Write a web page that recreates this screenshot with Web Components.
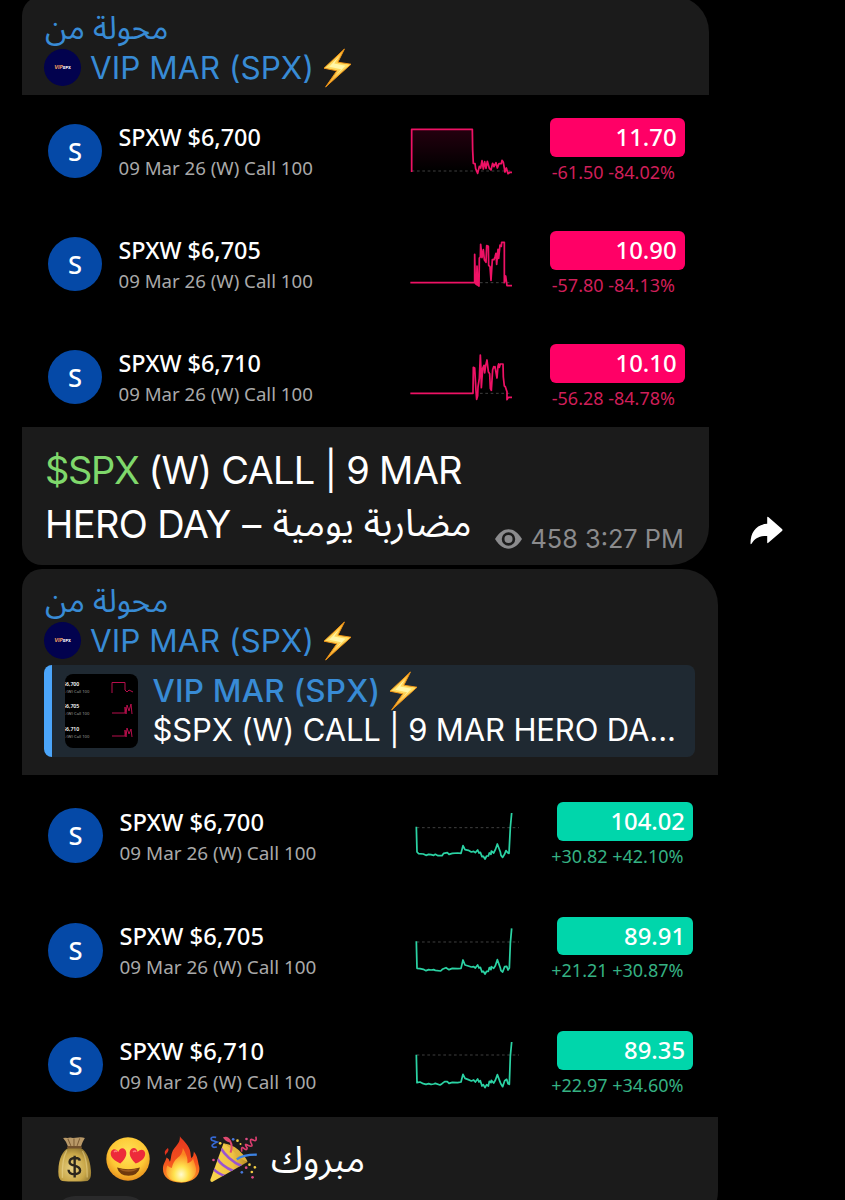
<!DOCTYPE html>
<html lang="ar">
<head>
<meta charset="utf-8">
<title>VIP MAR (SPX)</title>
<style>
  html, body {
    margin: 0;
    height: 1200px;
    overflow: hidden;
    background: #000;
  }
  body {
    font-family: Inter, "Noto Sans Arabic", "Liberation Sans", sans-serif;
    color: #fff;
  }
</style>
</head>
<body>
<chat-page></chat-page>

<script>
// setup runs on the cloned fragment, before the inner elements are connected
function define(name, html, setup) {
  const tmpl = document.createElement("template");
  tmpl.innerHTML = html;
  customElements.define(name, class extends HTMLElement {
    constructor() {
      super();
      this.attachShadow({ mode: "open" });
    }
    connectedCallback() {
      if (this.shadowRoot.firstChild) return;
      const view = tmpl.content.cloneNode(true);
      if (setup) setup(this, view);
      this.shadowRoot.appendChild(view);
    }
  });
}

// ---------- icons ----------

define("icon-bolt", `
<style>
  :host { display: block; width: 29px; height: 40px; flex: none; }
  svg { display: block; width: 100%; height: 100%; }
</style>
<svg viewBox="970 144 88 121">
  <defs><linearGradient id="g" x1="0" y1="0" x2="0" y2="1">
    <stop offset="0" stop-color="#ffae25"/><stop offset=".45" stop-color="#ffe36a"/><stop offset="1" stop-color="#f59a1c"/>
  </linearGradient></defs>
  <path d="M1035 147 L973 205 L1012 213 L978 262 L1055 193 L1015 187 Z" fill="url(#g)" stroke="#ef9416" stroke-width="3" stroke-linejoin="round"/>
  <path d="M1021 166 L989 201 L1025 208 L1003 234 L1038 198 L1004 191 Z" fill="#fff6a8"/>
</svg>`);

define("icon-eye", `
<style>
  :host { display: block; width: 27px; height: 20px; flex: none; }
  svg { display: block; }
</style>
<svg width="27" height="20" viewBox="0 0 27 20">
  <path d="M0 10 C4 3.4 8.6 .3 13.5 .3 S23 3.4 27 10 C23 16.6 18.4 19.7 13.5 19.7 S4 16.6 0 10 Z" fill="#8b8b8d"/>
  <circle cx="13.5" cy="10" r="5.4" fill="none" stroke="#1c1c1c" stroke-width="2.7"/>
</svg>`);

define("icon-share", `
<style>
  :host { display: block; width: 33px; height: 29px; }
  svg { display: block; }
</style>
<svg width="33" height="29" viewBox="0 0 33 29">
  <path d="M17.2 1.6 Q17.2 .2 18.3 1.1 L32 13 Q33 14 32 15 L18.3 26.8 Q17.2 27.7 17.2 26.3 V20 C9.5 19.8 4.8 22.4 1.7 27.6 Q.6 29 .5 27.2 C.5 16 6.5 8.3 17.2 7.8 Z" fill="#fff"/>
</svg>`);

define("emoji-row", `
<style>
  :host { display: flex; align-items: center; }
  svg { display: block; flex: none; }
  .bag { margin-right: 14px; }
  .face { margin-right: 12px; }
  .fire { margin-right: 8px; }
</style>
<svg class="bag" width="34" height="45" viewBox="56 36 100 132">
  <defs><radialGradient id="b" cx=".42" cy=".6" r=".65">
    <stop offset="0" stop-color="#e6cf82"/><stop offset=".65" stop-color="#c9a748"/><stop offset="1" stop-color="#8f742f"/>
  </radialGradient></defs>
  <path d="M71 39 Q78 37 84 39 Q92 36 100 39 Q108 37 115 37 Q126 35 135 39 Q128 50 123 65 H86 Q81 50 71 39 Z" fill="#b99968"/>
  <path d="M85 41 L94 62 M103 40 V62 M120 40 L112 62" stroke="#7d5e35" stroke-width="3"/>
  <path d="M86 68 C70 77 58 98 57 135 Q56 162 68 165 Q104 169 143 165 Q155 160 153 134 C150 98 139 77 123 68 Z" fill="url(#b)"/>
  <path d="M82 75 Q67 100 69 156 M128 77 Q142 101 142 155" fill="none" stroke="#f0dc98" stroke-width="4" opacity=".5"/>
  <rect x="83" y="62" width="43" height="8" rx="4" fill="#73522d"/>
  <path d="M120 105 C119 95 91 94 90 109 C90 125 121 115 121 134 C121 149 88 150 87 132 M105 91 V155" fill="none" stroke="#2b261d" stroke-width="7"/>
</svg>
<svg class="face" width="44" height="44" viewBox="0 0 44 44">
  <defs>
    <radialGradient id="f" cx=".5" cy=".38" r=".62"><stop offset="0" stop-color="#ffe45a"/><stop offset=".65" stop-color="#fdc835"/><stop offset="1" stop-color="#e8901d"/></radialGradient>
    <path id="h" d="M0 7.5 C-8.5 2.2 -9 -3.6 -6.6 -6.2 C-4.3 -8.6 -1 -7.2 0 -4 C1.6 -7.2 5 -8.2 7 -5.4 C9.2 -2 7 3.6 0 7.5 Z"/>
  </defs>
  <circle cx="22" cy="22" r="21.7" fill="url(#f)"/>
  <use href="#h" transform="translate(13 19) rotate(-10)" fill="#ed2b3a"/>
  <use href="#h" transform="translate(31 19) rotate(10)" fill="#ed2b3a"/>
  <path d="M8 15 Q10 13 11 15 M27 15 Q29 13 30 15" stroke="#ff7a80" stroke-width="1.5" fill="none"/>
  <path d="M11 30.5 Q22 34 34 30.5 Q32 38.5 22.5 38.8 Q13 38.5 11 30.5 Z" fill="#70390d"/>
  <path d="M13 31.6 Q22 34 32 31.6 Q28 34.8 22.5 34.8 Q16 34.8 13 31.6 Z" fill="#9c5b1f"/>
</svg>
<svg class="fire" width="39" height="47" viewBox="365 30 116 142">
  <defs>
    <linearGradient id="o" x1="0" y1="0" x2="0" y2="1"><stop offset="0" stop-color="#e5361f"/><stop offset=".55" stop-color="#f4511e"/><stop offset="1" stop-color="#fb9a26"/></linearGradient>
    <radialGradient id="y" cx=".5" cy=".78" r=".6"><stop offset="0" stop-color="#fffbd0"/><stop offset=".4" stop-color="#ffe34f"/><stop offset="1" stop-color="#fb8421"/></radialGradient>
  </defs>
  <path d="M418 31 C427 44 447 58 450 80 Q451 92 453 97 Q461 91 460 77 C472 91 472 106 476 121 C482 146 463 170 423 171 C383 171 366 151 367 128 C367 115 374 109 378 95 Q386 99 388 108 C393 97 390 88 397 74 C405 60 420 51 418 31 Z" fill="url(#o)"/>
  <path d="M382 66 Q387 74 377 84 Q372 92 374 86 Q368 76 382 66 Z" fill="#df321d"/>
  <path d="M427 66 C436 83 443 96 441 112 Q453 109 458 98 C464 119 473 132 462 150 Q450 169 423 169 Q392 169 381 151 Q373 136 380 119 Q388 126 394 127 C397 109 406 99 417 91 Q427 80 427 66 Z" fill="url(#y)"/>
</svg>
<svg width="49" height="48" viewBox="507 29 146 144">
  <defs>
    <clipPath id="c"><path d="M550 54 Q574 62 622 110 L516 170 Q509 170 511 162 Z"/></clipPath>
    <linearGradient id="p"><stop offset="0" stop-color="#f8d54c"/><stop offset=".6" stop-color="#efc344"/><stop offset="1" stop-color="#b98a24"/></linearGradient>
  </defs>
  <path d="M550 54 Q574 62 622 110 L516 170 Q509 170 511 162 Z" fill="url(#p)"/>
  <g clip-path="url(#c)" stroke="#9a55cf" stroke-width="8" fill="none">
    <path d="M541 67 Q562 103 605 123 M529 97 Q545 124 580 137 M517 128 Q533 147 560 153"/>
  </g>
  <path d="M550 54 Q583 58 608 87 Q621 103 622 110 Q602 103 582 80 Q563 62 550 54 Z" fill="#e0b23a"/>
  <path d="M571 82 C582 54 563 34 553 38 Q561 49 573 49" fill="none" stroke="#e04a70" stroke-width="6"/>
  <path d="M590 102 Q608 88 650 88" fill="none" stroke="#3d83e2" stroke-width="7"/>
  <path d="M528 36 Q507 33 515 45 L531 50 Q507 60 521 66 L530 65" fill="none" stroke="#3568d2" stroke-width="5"/>
  <path d="M605 79 Q602 61 611 69 Q620 77 621 68 Q610 52 623 60 Q642 68 632 52 Q628 38 639 44 Q651 51 647 34" fill="none" stroke="#dc3e70" stroke-width="5"/>
  <g fill="#4779dc"><circle cx="579" cy="42" r="4"/><circle cx="605" cy="141" r="4"/></g>
  <g fill="#f4cf43"><circle cx="540" cy="54" r="4"/><circle cx="592" cy="46" r="4"/><circle cx="601" cy="56" r="3"/><circle cx="628" cy="118" r="4"/><circle cx="644" cy="126" r="4"/><circle cx="635" cy="140" r="4"/></g>
  <g fill="#dd4d85"><circle cx="619" cy="41" r="4"/><circle cx="520" cy="104" r="4"/><circle cx="618" cy="127" r="4"/><circle cx="637" cy="156" r="4"/></g>
</svg>`);

// ---------- market rows ----------

// each chart is drawn in thirds of a pixel
const charts = {
  r1: { box: "75 -15 345 240", dash: "M95 213 H395",
    line: "M95 216 V88 H277 L278 150 L280 190 L285 191 L287 206 L293 220 L298 199 L302 204 L306 182 L310 207 L314 185 L318 205 L322 184 L328 205 L333 210 L338 190 L342 200 L348 188 L352 204 L357 191 L364 191 L366 181 L370 187 L375 216 L379 204 L384 221 L390 217 H396",
    fill: "M95 213 V88 H277 L280 190 L285 213 Z" },
  r2: { box: "75 -21 345 240", dash: "M300 203 H395",
    line: "M91 203 H284 V118 L286 205 L290 209 L291 153 L294 211 L297 213 L298 129 L301 126 L302 88 L306 128 L310 104 L313 134 L318 142 L320 92 L325 94 L326 151 L330 155 L333 196 L337 134 H342 L345 126 L348 115 L350 148 L354 103 L356 130 L360 90 L364 94 L365 82 L373 82 L373 203 L377 183 L381 212 H396" },
  r3: { box: "75 318 345 240", dash: "M300 535 H395",
    line: "M91 535 H279 L280 457 L284 459 L288 528 L290 553 L293 542 L294 516 L298 490 L301 420 L303 463 L304 518 L308 460 L312 451 L314 474 L317 452 L321 435 L325 470 L329 476 L331 520 L334 526 L338 464 L341 455 L344 458 L345 455 L351 489 L354 453 L356 447 L358 457 L361 447 H369 L370 486 L373 513 L376 515 L381 530 V554 L385 547 H396" },
  g1: { box: "75 -15 345 240", dash: "M110 143 H417",
    line: "M109 140 L111 216 L116 221 L130 222 L138 226 L146 223 L153 224 L161 226 L166 223 L174 227 L186 227 L191 220 L202 218 L207 223 L217 220 L233 219 L243 220 L249 197 L255 209 L265 211 L274 216 L281 214 L286 218 L293 210 L297 219 L301 217 L306 230 L310 229 L315 237 L320 228 L325 228 L328 219 L333 223 L334 213 L341 219 L346 209 L352 192 L361 216 L363 226 L368 232 L374 222 L378 212 L384 219 L387 220 L391 143 L395 99" },
  g2: { box: "75 -1 345 240", dash: "M110 155 H417",
    line: "M109 153 L111 234 L120 235 L130 237 L138 241 L146 238 L153 239 L161 238 L166 240 L182 242 L187 237 L198 232 L207 238 L217 234 L233 235 L243 234 L249 209 L255 224 L265 227 L274 230 L281 229 L286 233 L293 224 L297 233 L301 231 L306 245 L310 243 L315 251 L320 243 L325 243 L328 232 L333 238 L334 229 L341 234 L346 226 L352 208 L361 233 L363 241 L368 245 L374 229 L380 228 L384 239 L388 233 L391 160 L395 114" },
  g3: { box: "75 343 345 240", dash: "M110 496 H417",
    line: "M109 495 L111 579 L120 577 L130 582 L138 584 L146 582 L153 584 L161 583 L166 581 L180 586 L186 582 L194 576 L202 576 L207 581 L217 578 L233 579 L243 577 L249 554 L255 566 L265 570 L274 574 L281 571 L286 577 L293 568 L297 577 L301 573 L306 589 L310 585 L315 594 L320 585 L325 589 L328 575 L333 579 L334 572 L341 580 L346 572 L352 555 L361 579 L363 583 L368 591 L374 573 L380 569 L384 582 L388 584 L391 500 L395 457" }
};

define("spark-line", `
<style>
  :host { display: block; width: 115px; height: 80px; }
  svg { display: block; width: 115px; height: 80px; overflow: visible; }
  .line { fill: none; stroke: currentColor; stroke-width: 5.2; stroke-linejoin: round; }
  .dash { fill: none; stroke: #4c4c4c; stroke-width: 2.5; stroke-dasharray: 8 8; }
</style>
<svg>
  <defs><linearGradient id="g" x1="0" y1="0" x2="0" y2="1">
    <stop offset="0" stop-color="#ff0066" stop-opacity=".14"/><stop offset="1" stop-color="#ff0066" stop-opacity="0"/>
  </linearGradient></defs>
  <path class="fill" fill="url(#g)"/><path class="dash"/><path class="line"/>
</svg>`, (el, view) => {
  const c = charts[el.getAttribute("chart")];
  view.querySelector("svg").setAttribute("viewBox", c.box);
  view.querySelector(".dash").setAttribute("d", c.dash);
  view.querySelector(".line").setAttribute("d", c.line);
  view.querySelector(".fill").setAttribute("d", c.fill || "");
});

define("option-row", `
<style>
  :host {
    display: flex;
    align-items: flex-start;
    flex: none;
    height: var(--pitch);
    padding-left: 26.5px;
    box-sizing: border-box;
    font-family: "Noto Sans", "Open Sans", sans-serif;
    line-height: 1;
  }
  .logo {
    display: flex; align-items: center; justify-content: center;
    width: var(--logo); height: var(--logo);
    margin-top: var(--logo-top);
    border-radius: 50%;
    background: #0549a7;
    font-size: 25.5px; font-weight: 500;
    box-sizing: border-box; padding-top: 1px;
    flex: none;
  }
  .name { flex: none; width: var(--name-w); margin: var(--name-top) 0 0 var(--name-gap); white-space: nowrap; }
  h4 { margin: 0; font-size: var(--title); font-weight: 500; line-height: 26px; }
  p { margin: 5px 0 0; font-size: var(--sub); line-height: 26px; color: #a9a9a9; }
  .quote { flex: none; display: flex; flex-direction: column; align-items: flex-end; width: var(--pill-w); margin: var(--pill-top) 0 0 var(--pill-gap); }
  .pill {
    width: 100%; height: 38.5px; line-height: 38.5px;
    box-sizing: border-box; padding-right: 8px; text-align: right;
    border-radius: 6px; background: var(--tone);
    font-size: 23.8px; font-weight: 500;
  }
  .change { margin-top: 2px; padding-right: 9.5px; line-height: 26px; font-size: 18px; white-space: nowrap; color: var(--tone-text); }
  spark-line { color: var(--tone-line); flex: none; }
</style>
<div class="logo">S</div>
<div class="name"><h4></h4><p>09 Mar 26 (W) Call 100</p></div>
<spark-line></spark-line>
<div class="quote"><div class="pill"></div><div class="change"></div></div>
`, (el, view) => {
  view.querySelector("h4").textContent = "SPXW $" + el.getAttribute("strike");
  view.querySelector("spark-line").setAttribute("chart", el.getAttribute("chart"));
  view.querySelector(".pill").textContent = el.getAttribute("price");
  view.querySelector(".change").textContent = el.getAttribute("change");
});

define("option-list", `
<style>
  :host {
    display: flex; flex-direction: column; overflow: hidden; background: #000; height: 332px;
    --pitch: 113px; --logo: 54px; --logo-top: 29px; --name-gap: 16.5px; --name-w: 286.5px; --name-top: 29px;
    --title: 23.4px; --sub: 18.65px; --pill-w: 135px; --pill-gap: 29.5px; --pill-top: 23px;
    --tone: #ff0066; --tone-line: #ee1265; --tone-text: #cf1f59;
  }
  :host([up]) {
    height: 342px;
    --pitch: 114.7px; --logo: 55px; --logo-top: 33px; --name-gap: 16.5px; --name-w: 285.5px; --name-top: 33.5px;
    --title: 23.75px; --sub: 18.9px; --pill-w: 136.5px; --pill-gap: 36.5px; --pill-top: 27px;
    --tone: #00d6ab; --tone-line: #2bd3a4; --tone-text: #35b183;
  }
</style>
<slot></slot>`);

// ---------- message parts ----------

define("forward-header", `
<style>
  :host { display: block; padding: 13px 0 0 22.5px; color: #388bd5; }
  .label { height: 39px; font: 31.7px/39px "Noto Sans Arabic", sans-serif; padding-left: 1px; }
  .from { display: flex; align-items: center; height: 38px; font-size: 31.5px; font-weight: 430; letter-spacing: .05px; white-space: nowrap; }
  .avatar {
    display: flex; align-items: center; justify-content: center;
    width: 37px; height: 37px; margin-right: 9px; border-radius: 50%;
    background: #02024e; color: #fff;
    font-size: 3.8px; font-weight: 800;
  }
  .avatar i { color: #e3935f; font-size: 5px; }
  icon-bolt { margin-left: 9px; margin-top: 2px; }
</style>
<div class="label">محولة من</div>
<div class="from"><span class="avatar"><i>VIP</i>SPX</span><span>VIP MAR (SPX)</span><icon-bolt></icon-bolt></div>`);

define("reply-thumb", `
<style>
  :host {
    display: flex; flex-direction: column; box-sizing: border-box;
    width: 73px; height: 74px; padding-top: 7px; flex: none;
    border-radius: 8px; overflow: hidden; background: #000;
    font-family: "Noto Sans", sans-serif;
  }
  .row { display: flex; height: 24.5px; }
  .t { width: 42px; white-space: nowrap; font-size: 5.2px; line-height: 7px; font-weight: 600; }
  .t span { display: block; margin-left: -2px; }
  .t .s { font-size: 4.2px; font-weight: 400; color: #999; }
  svg { display: block; width: 26px; height: 16px; }
  path { fill: none; stroke: #b80e4c; stroke-width: 1; }
</style>
<div class="row"><div class="t"><span>$6,700</span><span class="s">6 (W) Call 100</span></div><svg viewBox="0 0 26 16"><path d="M5 12 V1.5 H18 V9 L20 11 L22 9 L24 10 L26 11"/></svg></div>
<div class="row"><div class="t"><span>$6,705</span><span class="s">6 (W) Call 100</span></div><svg viewBox="0 0 26 16"><path d="M5 10 H18 V4 L19 11 L20 2 L22 8 L24 1 L25 11"/></svg></div>
<div class="row"><div class="t"><span>$6,710</span><span class="s">6 (W) Call 100</span></div><svg viewBox="0 0 26 16"><path d="M5 10 H18 V4 L19 11 L20 2 L22 8 L24 3 L25 11"/></svg></div>`);

define("reply-quote", `
<style>
  :host {
    display: flex; box-sizing: border-box;
    width: 651px; height: 92px; margin: 6px 0 18px 22.5px;
    padding: 9px 0 0 13.5px;
    border-radius: 8px;
    background: linear-gradient(90deg, #4ba5fa 7.5px, #1f2932 7.5px); white-space: nowrap;
  }
  reply-thumb { margin-left: 7.5px; }
  .text { margin-left: 14.5px; }
  .name { display: flex; align-items: center; height: 34px; font-size: 31.4px; font-weight: 500; color: #388bd5; letter-spacing: .25px; }
  .body { height: 44px; line-height: 44px; font-size: 31px; letter-spacing: -.12px; }
  icon-bolt { margin-left: 9px; }
</style>
<reply-thumb></reply-thumb>
<div class="text">
  <div class="name"><span>VIP MAR (SPX)</span><icon-bolt></icon-bolt></div>
  <div class="body">$SPX (W) CALL | 9 MAR HERO DA...</div>
</div>`);

define("message-bubble", `
<style>
  :host {
    display: block; box-sizing: border-box; overflow: hidden;
    width: 687.5px; height: 568.5px;
    border-radius: 20px 36px 38px 20px;
    background: #1b1b1b;
  }
  :host([wide]) { width: 696.5px; height: 660px; }
  .head { height: 99px; }
  :host([wide]) .head { height: 206px; }
</style>
<div class="head"><forward-header></forward-header><slot name="reply"></slot></div>
<slot></slot>`);

define("message-text", `
<style>
  :host { display: block; padding: 16px 0 0 23.5px; font-size: 38px; line-height: 54px; white-space: nowrap; }
  .first { letter-spacing: -.75px; }
  .first b { font-weight: 400; color: #7fd86b; letter-spacing: -1.35px; }
  .second { display: flex; height: 54px; }
  .hero { letter-spacing: -.6px; }
  .dash { margin-left: 11.5px; }
  .ar { font: 37.7px/54px "Noto Sans Arabic", sans-serif; margin-left: 11.5px; }
  .meta { display: flex; align-items: center; height: 26px; margin: 28.5px 0 0 23px; color: #8b8b8d; font-size: 25.3px; line-height: 26px; }
  icon-eye { margin-right: 9px; }
</style>
<div class="first"><b>$SPX</b> (W) CALL | 9 MAR</div>
<div class="second"><span class="hero">HERO DAY</span><span class="dash">–</span><span class="ar">مضاربة يومية</span>
  <div class="meta"><icon-eye></icon-eye><span>458 3:27 PM</span></div>
</div>`);

define("congrats-text", `
<style>
  :host { display: flex; flex-direction: column; padding-left: 36px; }
  .line { display: flex; align-items: center; height: 79px; padding-top: 5px; box-sizing: border-box; }
  .word { font: 36.3px/54px "Noto Sans Arabic", sans-serif; margin: 3px 0 0 13.5px; }
  .reactions { width: 92px; height: 40px; border-radius: 20px; background: #2a2a2b; margin-left: -3px; }
</style>
<div class="line"><emoji-row></emoji-row><span class="word">مبروك</span></div>
<div class="reactions"></div>`);

define("chat-page", `
<style>
  :host { display: flex; flex-direction: column; gap: 4.5px; height: 1200px; overflow: hidden; padding-left: 21.5px; box-sizing: border-box; direction: ltr; }
  .row { display: flex; align-items: flex-end; flex: none; }
  .row:first-of-type { margin-top: -4px; }
  icon-share { margin: 0 0 19.5px 41px; }
</style>
<div class="row">
  <message-bubble>
    <option-list>
      <option-row strike="6,700" price="11.70" change="-61.50 -84.02%" chart="r1"></option-row>
      <option-row strike="6,705" price="10.90" change="-57.80 -84.13%" chart="r2"></option-row>
      <option-row strike="6,710" price="10.10" change="-56.28 -84.78%" chart="r3"></option-row>
    </option-list>
    <message-text></message-text>
  </message-bubble>
  <icon-share></icon-share>
</div>
<div class="row">
  <message-bubble wide>
    <reply-quote slot="reply"></reply-quote>
    <option-list up>
      <option-row strike="6,700" price="104.02" change="+30.82 +42.10%" chart="g1"></option-row>
      <option-row strike="6,705" price="89.91" change="+21.21 +30.87%" chart="g2"></option-row>
      <option-row strike="6,710" price="89.35" change="+22.97 +34.60%" chart="g3"></option-row>
    </option-list>
    <congrats-text></congrats-text>
  </message-bubble>
</div>`);
</script>
</body>
</html>
